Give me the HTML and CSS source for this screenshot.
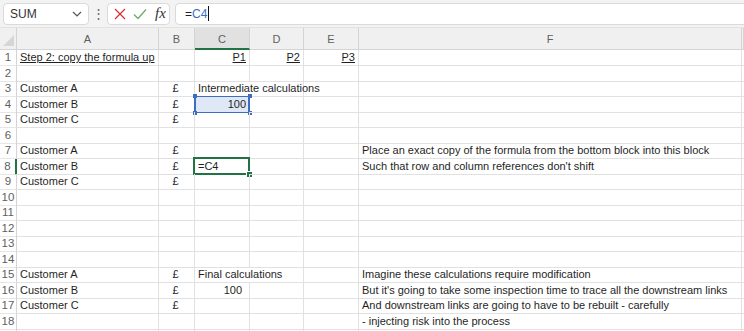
FILE: index.html
```html
<!DOCTYPE html>
<html lang="en">
<head>
    <meta charset="UTF-8">
    <meta name="viewport" content="width=device-width, initial-scale=1.0">
    <title>Copy the formula up</title>
    <link rel="stylesheet" href="styles.css">
</head>
<body>

    <!-- Formula bar -->
    <div class="toolbar">
        <div class="name-box">
            <span>SUM</span>
            <svg class="chevron" width="10" height="6" viewBox="0 0 10 6"><path d="M1 1l4 4 4-4" fill="none" stroke="#555" stroke-width="1.2"/></svg>
        </div>
        <div class="dots">&#8942;</div>
        <div class="fx-box">
            <svg class="icon" width="12" height="12" viewBox="0 0 12 12"><path d="M1 1l10 10M11 1L1 11" stroke="#d13438" stroke-width="1.3"/></svg>
            <svg class="icon" width="14" height="12" viewBox="0 0 14 12"><path d="M1 6.5l4 4L13 1.5" fill="none" stroke="#6aae6a" stroke-width="1.3"/></svg>
            <span class="fx">fx</span>
        </div>
        <div class="formula">
            <span>=</span><span class="ref-text">C4</span><span class="caret"></span>
        </div>
    </div>

    <!-- Sheet -->
    <div class="sheet">
        <div class="row head">
            <div class="corner"><span class="tri"></span></div>
            <div class="col-h">A</div>
            <div class="col-h">B</div>
            <div class="col-h active">C</div>
            <div class="col-h">D</div>
            <div class="col-h">E</div>
            <div class="col-h">F</div>
            <div class="col-h"></div>
        </div>

        <div class="row">
            <div class="row-h">1</div>
            <div class="cell"><span class="u">Step 2: copy the formula up</span></div>
            <div class="cell"></div>
            <div class="cell num"><span class="u">P1</span></div>
            <div class="cell num"><span class="u">P2</span></div>
            <div class="cell num"><span class="u">P3</span></div>
            <div class="cell"></div>
            <div class="cell"></div>
        </div>

        <div class="row">
            <div class="row-h">2</div>
            <div class="cell"></div><div class="cell"></div><div class="cell"></div><div class="cell"></div><div class="cell"></div><div class="cell"></div><div class="cell"></div>
        </div>

        <div class="row">
            <div class="row-h">3</div>
            <div class="cell">Customer A</div>
            <div class="cell cur">£</div>
            <div class="cell span2">Intermediate calculations</div>
            <div class="cell"></div>
            <div class="cell"></div>
            <div class="cell"></div>
        </div>

        <div class="row">
            <div class="row-h">4</div>
            <div class="cell">Customer B</div>
            <div class="cell cur">£</div>
            <div class="cell num ref">100
                <span class="dot tl"></span><span class="dot tr"></span><span class="dot bl"></span><span class="dot br"></span>
            </div>
            <div class="cell"></div><div class="cell"></div><div class="cell"></div><div class="cell"></div>
        </div>

        <div class="row">
            <div class="row-h">5</div>
            <div class="cell">Customer C</div>
            <div class="cell cur">£</div>
            <div class="cell"></div><div class="cell"></div><div class="cell"></div><div class="cell"></div><div class="cell"></div>
        </div>

        <div class="row">
            <div class="row-h">6</div>
            <div class="cell"></div><div class="cell"></div><div class="cell"></div><div class="cell"></div><div class="cell"></div><div class="cell"></div><div class="cell"></div>
        </div>

        <div class="row">
            <div class="row-h">7</div>
            <div class="cell">Customer A</div>
            <div class="cell cur">£</div>
            <div class="cell"></div><div class="cell"></div><div class="cell"></div>
            <div class="cell">Place an exact copy of the formula from the bottom block into this block</div>
            <div class="cell"></div>
        </div>

        <div class="row">
            <div class="row-h current">8</div>
            <div class="cell">Customer B</div>
            <div class="cell cur">£</div>
            <div class="cell edit">=C4<span class="handle"></span></div>
            <div class="cell"></div><div class="cell"></div>
            <div class="cell">Such that row and column references don't shift</div>
            <div class="cell"></div>
        </div>

        <div class="row">
            <div class="row-h">9</div>
            <div class="cell">Customer C</div>
            <div class="cell cur">£</div>
            <div class="cell"></div><div class="cell"></div><div class="cell"></div><div class="cell"></div><div class="cell"></div>
        </div>

        <div class="row">
            <div class="row-h">10</div>
            <div class="cell"></div><div class="cell"></div><div class="cell"></div><div class="cell"></div><div class="cell"></div><div class="cell"></div><div class="cell"></div>
        </div>
        <div class="row">
            <div class="row-h">11</div>
            <div class="cell"></div><div class="cell"></div><div class="cell"></div><div class="cell"></div><div class="cell"></div><div class="cell"></div><div class="cell"></div>
        </div>
        <div class="row">
            <div class="row-h">12</div>
            <div class="cell"></div><div class="cell"></div><div class="cell"></div><div class="cell"></div><div class="cell"></div><div class="cell"></div><div class="cell"></div>
        </div>
        <div class="row">
            <div class="row-h">13</div>
            <div class="cell"></div><div class="cell"></div><div class="cell"></div><div class="cell"></div><div class="cell"></div><div class="cell"></div><div class="cell"></div>
        </div>
        <div class="row">
            <div class="row-h">14</div>
            <div class="cell"></div><div class="cell"></div><div class="cell"></div><div class="cell"></div><div class="cell"></div><div class="cell"></div><div class="cell"></div>
        </div>

        <div class="row">
            <div class="row-h">15</div>
            <div class="cell">Customer A</div>
            <div class="cell cur">£</div>
            <div class="cell span2">Final calculations</div>
            <div class="cell"></div>
            <div class="cell">Imagine these calculations require modification</div>
            <div class="cell"></div>
        </div>

        <div class="row">
            <div class="row-h">16</div>
            <div class="cell">Customer B</div>
            <div class="cell cur">£</div>
            <div class="cell num acct">100</div>
            <div class="cell"></div><div class="cell"></div>
            <div class="cell">But it's going to take some inspection time to trace all the downstream links</div>
            <div class="cell"></div>
        </div>

        <div class="row">
            <div class="row-h">17</div>
            <div class="cell">Customer C</div>
            <div class="cell cur">£</div>
            <div class="cell"></div><div class="cell"></div><div class="cell"></div>
            <div class="cell">And downstream links are going to have to be rebuilt - carefully</div>
            <div class="cell"></div>
        </div>

        <div class="row">
            <div class="row-h">18</div>
            <div class="cell"></div><div class="cell"></div><div class="cell"></div><div class="cell"></div><div class="cell"></div>
            <div class="cell">- injecting risk into the process</div>
            <div class="cell"></div>
        </div>

        <div class="row">
            <div class="row-h"></div>
            <div class="cell"></div><div class="cell"></div><div class="cell"></div><div class="cell"></div><div class="cell"></div><div class="cell"></div><div class="cell"></div>
        </div>
    </div>

</body>
</html>
```

FILE: styles.css
```css
body {
    margin: 0;
    font-family: 'Liberation Sans', Arial, sans-serif;
    background-color: #ffffff;
    color: #1f1f1f;
    overflow: hidden;
}

/* Formula bar */
.toolbar {
    display: flex;
    align-items: center;
    height: 28px;
    padding-left: 3px;
    background-color: #f3f3f3;
    box-sizing: border-box;
    border-bottom: 1px solid #e2e2e2;
}

.name-box,
.fx-box,
.formula {
    display: flex;
    align-items: center;
    height: 22px;
    box-sizing: border-box;
    background-color: #ffffff;
    border: 1px solid #dadada;
    border-radius: 4px;
}

.name-box {
    width: 86px;
    justify-content: space-between;
    padding: 0 6px 0 6px;
    font-size: 12px;
    color: #333;
}

.name-box .chevron {
    margin-top: 1px;
}

.dots {
    width: 18px;
    text-align: center;
    font-size: 13px;
    color: #666;
}

.fx-box {
    width: 63px;
    padding: 0 3px 0 6px;
    gap: 7px;
}

.fx {
    font-family: 'Liberation Serif', 'Times New Roman', serif;
    font-style: italic;
    font-size: 15px;
    color: #333;
    margin-left: 1px;
}

.formula {
    flex: 1;
    margin-left: 5px;
    margin-right: -6px;
    padding-left: 9px;
    font-size: 12px;
    color: #1f1f1f;
}

.formula .ref-text {
    color: #3a6fc4;
}

.caret {
    display: inline-block;
    width: 1px;
    height: 15px;
    margin-left: 1px;
    background-color: #111;
}

/* Grid */
.sheet {
    --cols: 17px 142px 36px 55px 54px 55px 383px 1fr;
}

.row {
    display: grid;
    grid-template-columns: var(--cols);
    height: 15.5px;
    font-size: 11px;
}

.row.head {
    height: 22px;
    background-color: #f0f0f0;
}

.corner {
    position: relative;
    border-right: 1px solid #d4d4d4;
    border-bottom: 1px solid #d4d4d4;
}

.corner .tri {
    position: absolute;
    right: 2px;
    bottom: 3px;
    width: 0;
    height: 0;
    border-left: 11px solid transparent;
    border-bottom: 11px solid #d6d6d6;
}

.col-h {
    display: flex;
    align-items: center;
    justify-content: center;
    color: #5f5f5f;
    border-right: 1px solid #d4d4d4;
    border-bottom: 1px solid #d4d4d4;
    padding-top: 1px;
}

.col-h.active {
    background-color: #e1e1e1;
    border-bottom: 2px solid #217346;
}

.row-h {
    color: #5f5f5f;
    font-size: 11.5px;
    text-align: center;
    line-height: 15px;
    border-right: 1px solid #d4d4d4;
    border-bottom: 1px solid #e6e6e6;
}

.row-h.current {
    border-right: 2px solid #217346;
}

.cell {
    position: relative;
    padding: 0 3px;
    line-height: 15px;
    white-space: nowrap;
    border-right: 1px solid #e1e1e1;
    border-bottom: 1px solid #e1e1e1;
}

.cell.span2 {
    grid-column: span 2;
}

.num {
    text-align: right;
}

.acct {
    padding-right: 7px;
}

.cur {
    text-align: center;
    padding-left: 1px;
}

.u {
    text-decoration: underline;
}

/* Referenced cell (blue) */
.ref {
    background-color: #dfe8f6;
}

.ref::before {
    content: "";
    position: absolute;
    left: -1px;
    top: -1px;
    right: -1px;
    bottom: -1px;
    border: 1px solid #3d6cc0;
    border-left-width: 2px;
    border-right-width: 2px;
}

.dot {
    position: absolute;
    width: 4px;
    height: 4px;
    background-color: #3d6cc0;
}

.dot.tl { left: -2px; top: -3px; }
.dot.tr { right: -3px; top: -3px; }
.dot.bl { left: -2px; bottom: -3px; }
.dot.br { right: -3px; bottom: -3px; }

/* Cell in edit mode (green) */
.edit::before {
    content: "";
    position: absolute;
    left: -2px;
    top: -2px;
    right: -1px;
    bottom: -1px;
    border: 2px solid #217346;
}

.edit .handle {
    position: absolute;
    right: -4px;
    bottom: -4px;
    width: 5px;
    height: 5px;
    background-color: #217346;
    border: 1px solid #ffffff;
}
```
